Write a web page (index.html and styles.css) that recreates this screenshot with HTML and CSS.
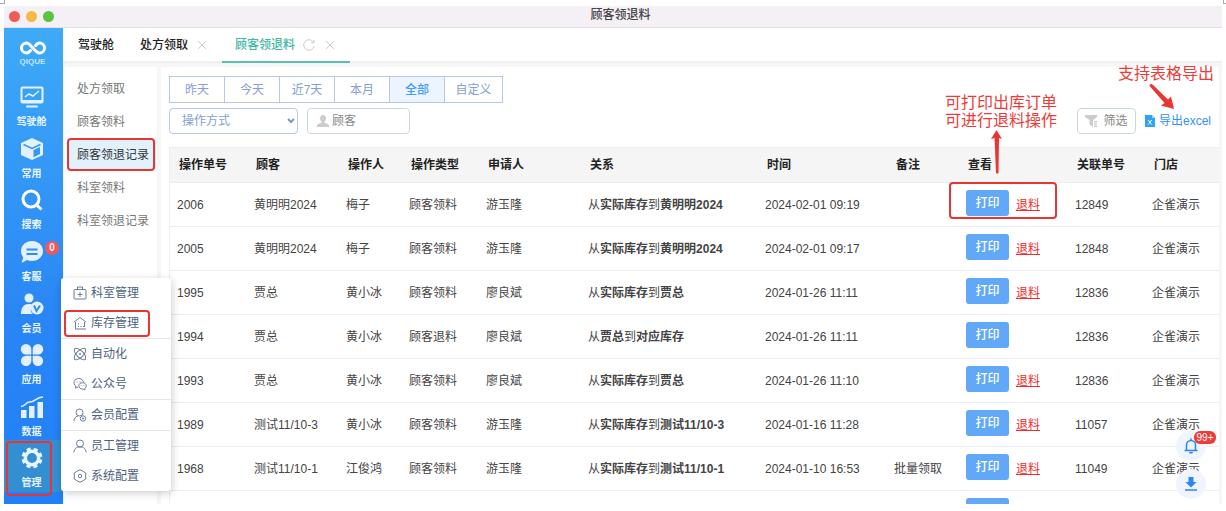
FILE: index.html
```html
<!DOCTYPE html>
<html lang="zh-CN">
<head>
    <meta charset="UTF-8">
    <title>顾客领退料</title>
    <link rel="stylesheet" href="styles.css">
</head>
<body>
    <i class="corner corner-left"></i>
    <i class="corner corner-right"></i>
    <div class="window">
        <header class="titlebar">
            <div class="lights"><i class="red"></i><i class="yellow"></i><i class="green"></i></div>
            <h1>顾客领退料</h1>
        </header>

        <div class="app">
            <aside class="sidebar">
                <div class="logo">
                    <svg width="26" height="14" viewBox="0 0 26 14" fill="none" stroke="#fff" stroke-width="3" stroke-linecap="round"><path d="M10.500 9.500C9 11.400 8 12 6.500 12A5 5 0 0 1 6.500 2C11 2 14.500 12 19.500 12A5 5 0 0 0 19.500 2C18 2 17 2.600 15.500 4.500"/></svg>
                    <span>QIQUE</span>
                </div>
                <nav class="nav">
                    <a href="#">
                        <svg width="24" height="22" viewBox="0 0 24 22" fill="none" stroke="#e3f1ff" stroke-width="2"><rect x="1.500" y="1.500" width="21" height="15" rx="1"/><path d="M2 15h20" stroke-width="2"/><path d="M5 11l4-3 4 2 6-5" stroke-width="1.500"/><path d="M7 20.500h10" stroke-linecap="round"/></svg>
                        驾驶舱
                    </a>
                    <a href="#">
                        <svg width="24" height="22" viewBox="0 0 24 22"><path d="M12 0L23 5v12L12 22 1 17V5z" fill="#e3f1ff"/><path d="M3.500 6.500l8.500 4 8.500-4" fill="none" stroke="#3498f5" stroke-width="1.500"/><path d="M13.500 12l6.500-3v7l-6.500 3.200z" fill="#3498f5"/></svg>
                        常用
                    </a>
                    <a href="#">
                        <svg width="24" height="22" viewBox="0 0 24 22" fill="none" stroke="#fff" stroke-width="3"><circle cx="11" cy="10" r="8"/><path d="M16.500 16l5 4.500"/></svg>
                        搜索
                    </a>
                    <a href="#">
                        <svg width="24" height="22" viewBox="0 0 24 22"><path d="M12 0c6 0 11 4.300 11 10s-5 10-11 10c-1.800 0-3.500-.4-5-1L1.500 22l1.700-5.500C1.800 14.700 1 12.500 1 10 1 4.300 6 0 12 0z" fill="#e3f1ff"/><path d="M6.500 8.500h11M6.500 13h11" stroke="#2d8cf2" stroke-width="2"/></svg>
                        客服
                        <b class="count">0</b>
                    </a>
                    <a href="#">
                        <svg width="24" height="22" viewBox="0 0 24 22"><circle cx="9" cy="5" r="4.500" fill="#e3f1ff"/><path d="M1 21c0-7 3-10 8-10 2 0 3 .5 4 1-3 3-3 7 0 9z" fill="#e3f1ff"/><circle cx="17" cy="15" r="6.500" fill="#e3f1ff"/><path d="M14 12.500l2.500 5.500 3.500-5.500" fill="none" stroke="#2d8cf2" stroke-width="2"/></svg>
                        会员
                    </a>
                    <a href="#">
                        <svg width="24" height="22" viewBox="0 0 24 22" fill="#e3f1ff"><path d="M6 0a5.300 5.300 0 0 1 5.300 5.300v5.200H6A5.200 5.200 0 0 1 6 0zM18 0a5.200 5.200 0 0 1 0 10.500h-5.300V5.300A5.300 5.300 0 0 1 18 0zM6 11.700h5.300V17A5.200 5.200 0 1 1 6 11.700zM12.700 11.700H18A5.200 5.200 0 1 1 12.700 17z"/></svg>
                        应用
                    </a>
                    <a href="#">
                        <svg width="24" height="22" viewBox="0 0 24 22" fill="#e3f1ff"><path d="M1 14h5.500v8H1zM9 10h5.500v12H9zM17.500 6H23v16h-5.500z"/><path d="M1 10.500C6 10 5 6 10 6S16 1 23 1" fill="none" stroke="#e3f1ff" stroke-width="1.500"/></svg>
                        数据
                    </a>
                    <a href="#" class="current">
                        <svg width="24" height="22" viewBox="0 0 24 22" fill="none" stroke="#e8f4ff"><circle cx="12" cy="11" r="6.700" stroke-width="3.500"/><circle cx="12" cy="11" r="9" stroke-width="3" stroke-dasharray="4 3.069" stroke-dashoffset="-1.500"/></svg>
                        管理
                        <span class="mark mark-nav"></span>
                    </a>
                </nav>

                <div class="popup">
                    <a href="#"><svg viewBox="0 0 14 14"><rect x="1" y="3.500" width="12" height="9.500" rx="1"/><path d="M4.500 3V1h5v2M7 6v5M4.500 8.500h5"/></svg>科室管理</a>
                    <a href="#"><svg viewBox="0 0 14 14"><path d="M2.500 6v7H13M1 6l6-4.500L13 6M11.500 6v5"/><path d="M5 8h1M5 10.500h1M7.500 10.500h1M10 10.500h1"/></svg>库存管理<span class="mark mark-popup"></span></a>
                    <hr>
                    <a href="#"><svg viewBox="0 0 14 14"><ellipse cx="7" cy="7" rx="7.500" ry="3.300" transform="rotate(45 7 7)"/><ellipse cx="7" cy="7" rx="7.500" ry="3.300" transform="rotate(-45 7 7)"/><circle cx="7" cy="7" r=".7"/></svg>自动化</a>
                    <a href="#"><svg viewBox="0 0 14 14"><path d="M5 10l-2.500 1.200.4-2C-.8 6.500 1.300 1.500 5.700 1.500c3 0 4.700 2 4.800 4"/><path d="M9.500 5.700c4 0 5 4 2.300 5.800l.2 1.500-1.600-.8C4.500 12.500 4.300 5.800 9.500 5.700zM4 4.500v.8M7 4.500v.8M8.200 8.200v.7M10.800 8.200v.7"/></svg>公众号</a>
                    <hr>
                    <a href="#"><svg viewBox="0 0 14 14"><circle cx="6.500" cy="4.500" r="3.500"/><path d="M1 13c0-2.500 1.500-4.500 4-5"/><circle cx="10" cy="10.500" r="2.700"/><circle cx="10" cy="10.500" r=".7"/></svg>会员配置</a>
                    <hr>
                    <a href="#"><svg viewBox="0 0 14 14"><circle cx="7" cy="4.500" r="3.500"/><path d="M1 13.500C1 10 3 8 7 8s6 2 6 5.500"/></svg>员工管理</a>
                    <a href="#"><svg viewBox="0 0 14 14"><path d="M4.500 2L7 .8 9.500 2 12.700 4v6L9.500 12 7 13.200 4.500 12 1.300 10V4z"/><circle cx="7" cy="7" r="1.700"/></svg>系统配置</a>
                </div>
            </aside>

            <div class="content">
                <div class="tabs">
                    <a href="#" class="tab">驾驶舱</a>
                    <a href="#" class="tab">处方领取
                        <svg width="8" height="8" viewBox="0 0 8 8"><path d="M0 0l8 8M8 0L0 8"/></svg>
                    </a>
                    <a href="#" class="tab active">顾客领退料
                        <svg class="reload" width="12" height="12" viewBox="0 0 12 12"><path d="M10.500 3.200A5.300 5.300 0 1 0 11.200 7M11 .8v2.900H8"/></svg>
                        <svg width="8" height="8" viewBox="0 0 8 8"><path d="M0 0l8 8M8 0L0 8"/></svg>
                    </a>
                </div>

                <div class="body">
                    <nav class="submenu">
                        <a href="#">处方领取</a>
                        <a href="#">顾客领料</a>
                        <a href="#" class="active">顾客领退记录<span class="mark mark-submenu"></span></a>
                        <a href="#">科室领料</a>
                        <a href="#">科室领退记录</a>
                    </nav>

                    <main class="main">
                        <div class="ranges">
                            <button>昨天</button>
                            <button>今天</button>
                            <button>近7天</button>
                            <button>本月</button>
                            <button class="active">全部</button>
                            <button>自定义</button>
                        </div>
                        <div class="filters">
                            <div class="select">
                                <select aria-label="操作方式">
                                    <option>操作方式</option>
                                </select>
                                <svg width="8" height="6" viewBox="0 0 8 6"><path d="M1 1l3 3 3-3"/></svg>
                            </div>
                            <label class="search">
                                <svg width="12" height="12" viewBox="0 0 12 12" fill="#ccc"><path d="M6 0c2 0 3 1.300 3 3.200 0 1.600-.6 2.700-1.500 3.500v1L11 9c.7.400 1 1 1 3H0c0-2 .3-2.600 1-3l3.500-1.300v-1C3.600 5.900 3 4.800 3 3.200 3 1.300 4 0 6 0z"/></svg>
                                <input type="text" placeholder="顾客" aria-label="顾客">
                            </label>
                            <button class="filter-btn">
                                <svg width="13" height="12" viewBox="0 0 13 12" fill="#ccc"><path d="M0 0h12v2L8 5v7L4.500 9.500V5L0 2zM9 6h3v1.300H9zM9 8.300h3v1.300H9zM9 10.600h3V12H9z"/></svg>
                                筛选
                            </button>
                            <a href="#" class="export">
                                <svg width="10" height="12" viewBox="0 0 10 12"><path d="M0 0h7l3 3v9H0z" fill="#2ea3f8"/><path d="M7 0v3h3" fill="#a9d8fc"/><path d="M3.300 5l3.400 4.500M6.700 5L3.300 9.500" stroke="#fff" fill="none"/></svg>
                                导出excel
                            </a>
                        </div>

                        <table>
                            <colgroup>
                                <col class="c-no"><col class="c-customer"><col class="c-operator"><col class="c-type"><col class="c-applicant"><col class="c-relation"><col class="c-time"><col class="c-remark"><col class="c-view"><col class="c-linked"><col>
                            </colgroup>
                            <thead>
                                <tr><th>操作单号</th><th>顾客</th><th>操作人</th><th>操作类型</th><th>申请人</th><th>关系</th><th>时间</th><th>备注</th><th>查看</th><th>关联单号</th><th>门店</th></tr>
                            </thead>
                            <tbody>
                                <tr><td>2006</td><td>黄明明2024</td><td>梅子</td><td>顾客领料</td><td>游玉隆</td><td>从<b>实际库存</b>到<b>黄明明2024</b></td><td>2024-02-01 09:19</td><td></td><td class="ops"><button>打印</button><a href="#">退料</a><span class="mark mark-ops"></span></td><td>12849</td><td>企雀演示</td></tr>
                                <tr><td>2005</td><td>黄明明2024</td><td>梅子</td><td>顾客领料</td><td>游玉隆</td><td>从<b>实际库存</b>到<b>黄明明2024</b></td><td>2024-02-01 09:17</td><td></td><td class="ops"><button>打印</button><a href="#">退料</a></td><td>12848</td><td>企雀演示</td></tr>
                                <tr><td>1995</td><td>贾总</td><td>黄小冰</td><td>顾客领料</td><td>廖良斌</td><td>从<b>实际库存</b>到<b>贾总</b></td><td>2024-01-26 11:11</td><td></td><td class="ops"><button>打印</button><a href="#">退料</a></td><td>12836</td><td>企雀演示</td></tr>
                                <tr><td>1994</td><td>贾总</td><td>黄小冰</td><td>顾客退料</td><td>廖良斌</td><td>从<b>贾总</b>到<b>对应库存</b></td><td>2024-01-26 11:11</td><td></td><td class="ops"><button>打印</button></td><td>12836</td><td>企雀演示</td></tr>
                                <tr><td>1993</td><td>贾总</td><td>黄小冰</td><td>顾客领料</td><td>廖良斌</td><td>从<b>实际库存</b>到<b>贾总</b></td><td>2024-01-26 11:10</td><td></td><td class="ops"><button>打印</button><a href="#">退料</a></td><td>12836</td><td>企雀演示</td></tr>
                                <tr><td>1989</td><td>测试11/10-3</td><td>黄小冰</td><td>顾客领料</td><td>游玉隆</td><td>从<b>实际库存</b>到<b>测试11/10-3</b></td><td>2024-01-16 11:28</td><td></td><td class="ops"><button>打印</button><a href="#">退料</a></td><td>11057</td><td>企雀演示</td></tr>
                                <tr><td>1968</td><td>测试11/10-1</td><td>江俊鸿</td><td>顾客领料</td><td>游玉隆</td><td>从<b>实际库存</b>到<b>测试11/10-1</b></td><td>2024-01-10 16:53</td><td>批量领取</td><td class="ops"><button>打印</button><a href="#">退料</a></td><td>11049</td><td>企雀演示</td></tr>
                                <tr><td></td><td></td><td></td><td></td><td></td><td></td><td></td><td></td><td class="ops"><button aria-label="打印"></button></td><td></td><td></td></tr>
                            </tbody>
                        </table>
                    </main>
                </div>
            </div>
        </div>

        <div class="floats">
            <button aria-label="消息">
                <svg width="14" height="16" viewBox="0 0 14 16"><path d="M2.500 12V7a4.500 4.500 0 0 1 9 0v5M.5 12.500h13M7 2.500V.5" fill="none" stroke="#2d84f5" stroke-width="1.500"/><path d="M5 14h4c0 2-4 2-4 0z" fill="#2d84f5"/></svg>
                <b>99+</b>
            </button>
            <button aria-label="下载">
                <svg width="14" height="14" viewBox="0 0 14 14" fill="#2d84f5"><path d="M4.500 0h5v5h3L7 10.500 1.500 5h3zM1 12.300h12v1.500H1z"/></svg>
            </button>
        </div>

        <!-- 操作说明标注 -->
        <div class="note note-print">
            可打印出库订单<br>可进行退料操作
            <svg width="12" height="44" viewBox="0 0 12 44"><path d="M5.500 0l5.500 9-3-1-.5 34.500c0 1.500-2.500 1.500-2.500 0L3.500 8 0 9z"/></svg>
        </div>
        <div class="note note-export">
            支持表格导出
            <svg width="28" height="28" viewBox="0 0 28 28"><path d="M2 1.500C3 .5 4 1 5 2l15 14.500 3-3L26 26l-13-3.500 3.500-2.500L2 3.500c-.6-.7-.6-1.400 0-2z"/></svg>
        </div>
    </div>
</body>
</html>
```

FILE: styles.css
```css
* {
    box-sizing: border-box;
}
body {
    position: relative;
    margin: 0;
    padding: 6px 4px 7px;
    height: 100vh;
    background: #fff;
    color: #444;
    font: 12px/18px "Liberation Sans", "Noto Sans CJK SC", sans-serif;
}
a {
    color: inherit;
    text-decoration: none;
}
button, input, select {
    font: inherit;
    color: inherit;
    margin: 0;
    cursor: pointer;
}
.corner {
    position: absolute;
    top: 0;
    height: 4px;
    border-bottom: 1px solid #aaa;
}
.corner-left {
    left: 0;
    width: 5px;
    border-right: 1px solid #aaa;
}
.corner-right {
    right: 0;
    width: 3px;
    border-left: 1px solid #aaa;
}
.window {
    position: relative;
    display: flex;
    flex-direction: column;
    height: 100%;
    overflow: hidden;
}

/* 标题栏 */
.titlebar {
    display: flex;
    align-items: center;
    flex: none;
    height: 22px;
    padding: 0 5px;
    background: #f5eff6;
    border-bottom: 1px solid #e2dfe3;
}
.titlebar h1 {
    flex: 1;
    margin: 0;
    padding: 0 30px 3px 0;
    text-align: center;
    font-size: 12px;
    line-height: 18px;
    font-weight: 500;
}
.lights {
    display: flex;
    gap: 6px;
}
.lights i {
    width: 11px;
    height: 11px;
    border-radius: 50%;
}
.red { background: #ee5c54; }
.yellow { background: #f5b944; }
.green { background: #5ac53c; }

.app {
    flex: 1;
    display: flex;
    min-height: 0;
}

/* 左侧导航 */
.sidebar {
    position: relative;
    z-index: 2;
    flex: none;
    display: flex;
    flex-direction: column;
    width: 59px;
    background: linear-gradient(#3eaaf7, #2a86f5 60%, #2080f8);
    color: #fff;
}
.logo {
    display: flex;
    flex-direction: column;
    align-items: center;
    height: 51px;
    padding: 13px 2px 0 0;
}
.logo span {
    color: #c5e3ff;
    font-size: 8px;
    line-height: 14px;
    font-weight: bold;
}
.nav {
    flex: 1;
    display: flex;
    flex-direction: column;
    padding-bottom: 12px;
}
.nav a {
    position: relative;
    flex: 1;
    display: flex;
    flex-direction: column;
    align-items: center;
    padding: 7px 4px 0 0;
    font-size: 10px;
    line-height: 16px;
    font-weight: bold;
    color: #e8f4ff;
}
.nav svg {
    flex: none;
    margin-bottom: 6px;
}
.nav .current {
    background: #348fd2;
}
.count {
    position: absolute;
    top: 7px;
    right: 4px;
    width: 14px;
    height: 14px;
    border-radius: 50%;
    background: #f0595b;
    line-height: 14px;
    text-align: center;
}

/* 弹出菜单 */
.popup {
    position: absolute;
    left: 57px;
    bottom: 13px;
    width: 110px;
    background: #fff;
    border-radius: 3px;
    box-shadow: 1px 2px 8px rgba(0, 0, 0, .2);
    color: #4c6280;
}
.popup a {
    position: relative;
    display: flex;
    align-items: center;
    gap: 4px;
    height: 30px;
    padding-left: 12px;
}
.popup svg {
    width: 14px;
    height: 14px;
    fill: none;
    stroke: #6b7d98;
}
.popup hr {
    margin: 0;
    border: 0;
    border-top: 1px solid #e6e6e6;
}

.content {
    flex: 1;
    display: flex;
    flex-direction: column;
    min-width: 0;
    background: #f6f6f6;
}
.tabs {
    flex: none;
    display: flex;
    height: 35px;
    margin-bottom: 4px;
    background: linear-gradient(#fff 33px, #f0f0f0 33px);
    color: #222;
    font-weight: 500;
}
.tab {
    display: flex;
    align-items: center;
    gap: 10px;
    padding: 0 12px 2px 15px;
}
.tab + .tab {
    padding: 0 16px 2px 14px;
}
.tabs svg {
    fill: none;
    stroke: #ccc;
}
.tabs .tab.active {
    gap: 8px;
    padding: 0 16px 0 13px;
    color: #43b8a4;
    border-bottom: 2px solid #5abfae;
}
.tabs .reload + svg {
    margin-left: 3px;
}

.body {
    flex: 1;
    display: flex;
    gap: 4px;
    min-height: 0;
    padding: 0 3px 0 1px;
}
.submenu {
    flex: none;
    width: 93px;
    padding: 7px 0;
    background: #fff;
    color: #777;
}
.submenu a {
    position: relative;
    display: block;
    height: 29px;
    margin: 0 1px 4px 4px;
    padding-left: 9px;
    line-height: 30px;
}
.submenu .active {
    background: #e1f2fd;
    color: #333;
}

.main {
    flex: 1;
    min-width: 0;
    padding: 9px 0 0 8px;
    background: #fff;
    overflow: hidden;
}
.ranges {
    display: flex;
    margin-bottom: 5px;
    color: #869ed6;
}
.ranges button {
    width: 56px;
    height: 27px;
    margin-right: -1px;
    padding: 0;
    border: 1px solid #b5c7ec;
    background: #fff;
}
.ranges button:last-child {
    width: 59px;
}
.ranges .active {
    background: #ecf5ff;
    color: #409eff;
    font-weight: 500;
}
.filters {
    display: flex;
    align-items: center;
    margin-bottom: 13px;
}
.select {
    position: relative;
}
.select select {
    display: block;
    width: 129px;
    height: 26px;
    padding: 0 12px;
    appearance: none;
    border: 1px solid #b5c7ec;
    border-radius: 4px;
    background: #fff;
    color: #869ed6;
}
.select svg {
    position: absolute;
    right: 3px;
    top: 10px;
    fill: none;
    stroke: #7b98d6;
    stroke-width: 2;
}
.search, .filter-btn {
    display: flex;
    align-items: center;
    height: 26px;
    border: 1px solid #c9d5ef;
    border-radius: 4px;
    background: #fff;
    color: #888;
}
.search {
    width: 103px;
    margin: 0 auto 0 9px;
    padding-left: 9px;
    gap: 3px;
}
.search svg {
    flex: none;
}
.search input {
    flex: 1;
    min-width: 0;
    padding: 0;
    border: 0;
    outline: 0;
}
.search input::placeholder {
    color: #888;
}
.filter-btn {
    justify-content: center;
    gap: 5px;
    width: 59px;
    margin-right: 9px;
    padding: 0;
    white-space: nowrap;
}
.export {
    display: flex;
    align-items: center;
    gap: 4px;
    margin-right: 8px;
    color: #3391f5;
}

/* 表格 */
table {
    width: 100%;
    table-layout: fixed;
    border-collapse: separate;
    border-spacing: 0;
    border-left: 1px solid #eee;
}
.c-no, .c-type, .c-linked { width: 77px; }
.c-customer { width: 92px; }
.c-operator { width: 63px; }
.c-applicant { width: 102px; }
.c-relation { width: 177px; }
.c-time { width: 129px; }
.c-remark { width: 72px; }
.c-view { width: 109px; }
th {
    height: 36px;
    padding: 0 9px;
    background: #f5f5f5;
    border-top: 1px solid #eee;
    border-bottom: 1px solid #ececf4;
    text-align: left;
    color: #222;
}
td {
    height: 44px;
    padding: 0 7px;
    border-bottom: 1px solid #ececf4;
    white-space: nowrap;
}
.ops {
    position: relative;
}
.ops button {
    width: 43px;
    height: 26px;
    margin: 0 7px 4px 0;
    padding: 0;
    border: 0;
    border-radius: 3px;
    background: #61a8f8;
    color: #fff;
    font-weight: 500;
    vertical-align: middle;
}
.ops a {
    color: #f32c2c;
    text-decoration: underline;
    vertical-align: middle;
}

/* 悬浮按钮 */
.floats {
    position: absolute;
    right: 16px;
    bottom: 5px;
    z-index: 3;
    display: flex;
    flex-direction: column;
    gap: 8px;
}
.floats button {
    position: relative;
    display: flex;
    align-items: center;
    justify-content: center;
    width: 30px;
    height: 30px;
    padding: 0;
    border: 0;
    border-radius: 50%;
    background: #eff5fe;
}
.floats b {
    position: absolute;
    left: 18px;
    top: 0;
    width: 22px;
    height: 13px;
    border-radius: 6px;
    background: #f03c38;
    color: #fff;
    font-size: 10px;
    line-height: 13px;
    font-weight: normal;
}

/* 红色标注 */
.mark {
    position: absolute;
    border: 2px solid #e93434;
    border-radius: 4px;
    pointer-events: none;
}
.mark-nav { inset: 1px 11px -4px 2px; }
.mark-popup { inset: 2px 21px 1px 3px; }
.mark-submenu { inset: -2px 1px -2px -1px; }
.mark-ops { inset: -1px 11px 7px -10px; }
.note {
    position: absolute;
    z-index: 4;
    color: #ee3b38;
    font-size: 16px;
    line-height: 18px;
    white-space: nowrap;
}
.note svg {
    position: absolute;
    fill: #ea3632;
}
.note-print {
    top: 88px;
    right: 165px;
}
.note-print svg {
    left: 46px;
    top: 36px;
}
.note-export {
    top: 59px;
    right: 8px;
}
.note-export svg {
    left: 30px;
    top: 18px;
}
```
